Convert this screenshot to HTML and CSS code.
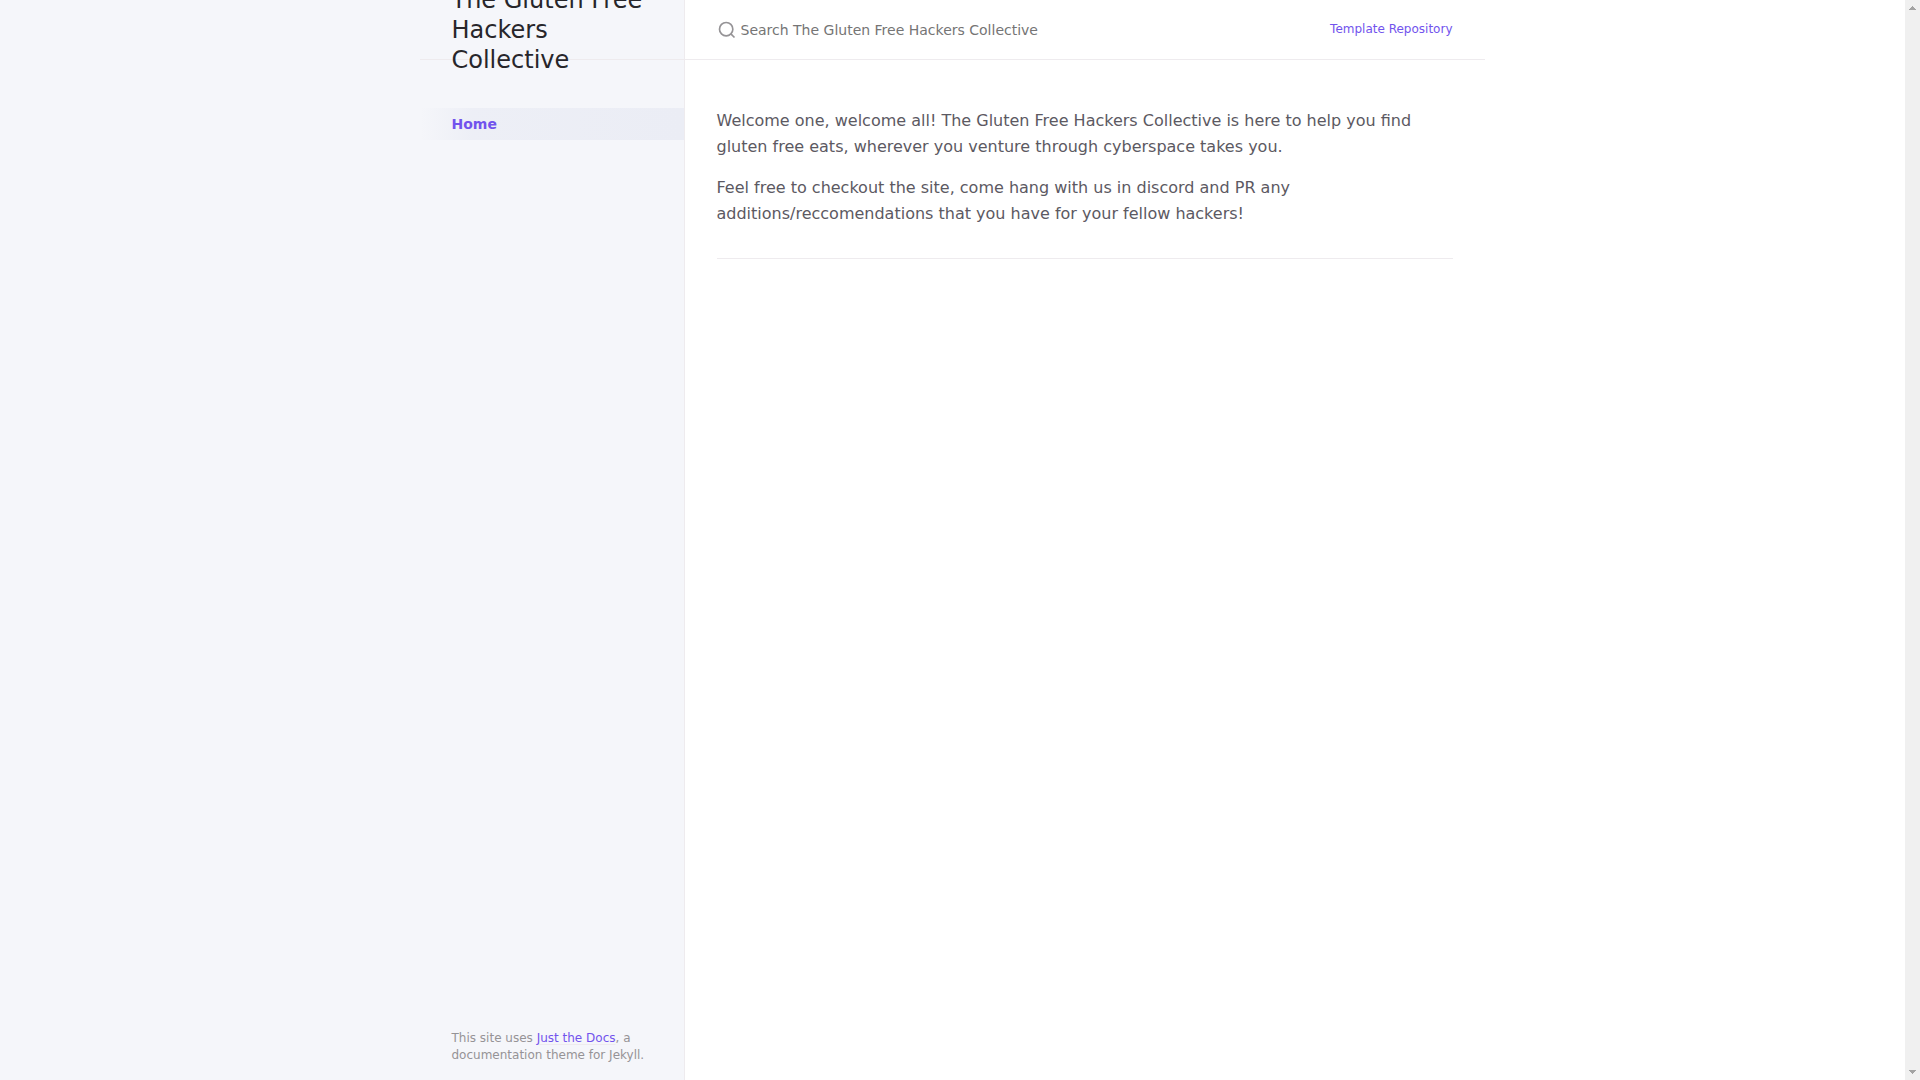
FILE: index.html
```html
<!DOCTYPE html>
<html lang="en">
<head>
<meta charset="utf-8">
<meta name="viewport" content="width=device-width, initial-scale=1">
<title>Home - The Gluten Free Hackers Collective</title>
<link rel="stylesheet" href="styles.css">
</head>
<body>
<div class="site">
  <div class="side-bar">
    <div class="side-inner">
      <div class="site-header">
        <a href="#" class="site-title">The Gluten Free Hackers Collective</a>
      </div>
      <nav class="site-nav" aria-label="Main">
        <a href="#" class="nav-link" aria-current="page">Home</a>
      </nav>
      <footer class="site-footer">This site uses <a href="#" class="footer-link">Just the Docs</a>, a documentation theme for Jekyll.</footer>
    </div>
  </div>
  <div class="main">
    <header class="main-header">
      <div class="search">
        <label class="search-label" for="search-input" aria-label="Search The Gluten Free Hackers Collective">
          <svg class="search-icon" viewBox="0 0 24 24" fill="none" stroke="currentColor" stroke-width="2" aria-hidden="true"><circle cx="11" cy="11" r="8"/><line x1="21" y1="21" x2="16.65" y2="16.65"/></svg>
        </label>
        <input class="search-input" type="text" id="search-input" placeholder="Search The Gluten Free Hackers Collective" autocomplete="off">
      </div>
      <a href="#" class="aux-link">Template Repository</a>
    </header>
    <main class="main-content">
      <p>Welcome one, welcome all! The Gluten Free Hackers Collective is here to help you find gluten free eats, wherever you venture through cyberspace takes you.</p>
      <p>Feel free to checkout the site, come hang with us in discord and PR any additions/reccomendations that you have for your fellow hackers!</p>
      <hr>
    </main>
  </div>
</div>
<div class="scroll-track" aria-hidden="true">
  <svg class="scroll-arrow" viewBox="0 0 7 4" shape-rendering="crispEdges"><path d="M3 0h1v1h1v1h1v1h1v1H0V3h1V2h1V1h1z"/></svg>
  <svg class="scroll-arrow" viewBox="0 0 7 4" shape-rendering="crispEdges"><path d="M0 0h7v1H6v1H5v1H4v1H3V3H2V2H1V1H0z"/></svg>
</div>
</body>
</html>
```
FILE: styles.css
```css
* {
  box-sizing: border-box;
}

body {
  display: flex;
  min-height: 100vh;
  margin: 0;
  background: #fff;
  color: #5c5962;
  font: 16px/26px "DejaVu Sans", sans-serif;
}

a {
  color: #7253ed;
  text-decoration: none;
}

.site {
  display: flex;
  flex: 1;
  min-width: 0;
}

/* The side bar takes the free space left of the centred 1064px page. */
.side-bar {
  display: flex;
  justify-content: flex-end;
  width: calc((100% - 1064px) / 2 + 264px);
  min-width: 264px;
  border-right: 1px solid #eeebee;
  background: #f5f6fa;
}

.side-inner {
  display: flex;
  flex-direction: column;
  width: 264px;
}

.site-header {
  display: flex;
  align-items: center;
  height: 60px;
  padding: 0 32px;
  border-bottom: 1px solid #eeebee;
}

.site-title {
  color: #27262b;
  font-size: 24px;
  line-height: 30px;
}

.site-nav {
  margin-top: 48px;
}

.nav-link {
  display: block;
  padding: 0 32px;
  background: linear-gradient(-90deg, #ebedf5 0%, rgba(235, 237, 245, 0.8) 80%, rgba(235, 237, 245, 0) 100%);
  font-size: 14px;
  font-weight: 700;
  line-height: 32px;
}

.site-footer {
  margin-top: auto;
  padding: 16px 32px;
  color: #959396;
  font-size: 12px;
  line-height: 17px;
}

.footer-link {
  text-decoration: underline;
  text-decoration-color: #eeebee;
  text-underline-offset: 2px;
}

.main {
  flex: 1;
  min-width: 0;
  max-width: 800px;
}

.main-header {
  display: flex;
  align-items: center;
  height: 60px;
  padding: 0 32px;
  border-bottom: 1px solid #eeebee;
}

.search {
  display: flex;
  flex: 1;
  align-items: center;
  gap: 4px;
}

.search-label,
.search-icon {
  display: block;
  width: 20px;
  height: 20px;
  color: #959396;
}

.search-input {
  flex: 1;
  min-width: 0;
  padding: 0;
  border: 0;
  outline: 0;
  background: transparent;
  color: #5c5962;
  font: 14px/20px "DejaVu Sans", sans-serif;
}

.search-input::placeholder {
  color: #757575;
}

.aux-link {
  padding-bottom: 2px;
  font-size: 12px;
  line-height: 20px;
}

.main-content {
  padding: 48px 32px;
}

.main-content p {
  margin: 0 0 15px;
}

.main-content hr {
  height: 1px;
  margin: 31px 0;
  border: 0;
  background: #eeebee;
}

.scroll-track {
  display: flex;
  flex-direction: column;
  align-items: center;
  justify-content: space-between;
  width: 15px;
  padding: 6px 0;
  background: #f0f0f0;
}

.scroll-arrow {
  display: block;
  width: 7px;
  height: 4px;
  fill: #a3a3a3;
}
```
